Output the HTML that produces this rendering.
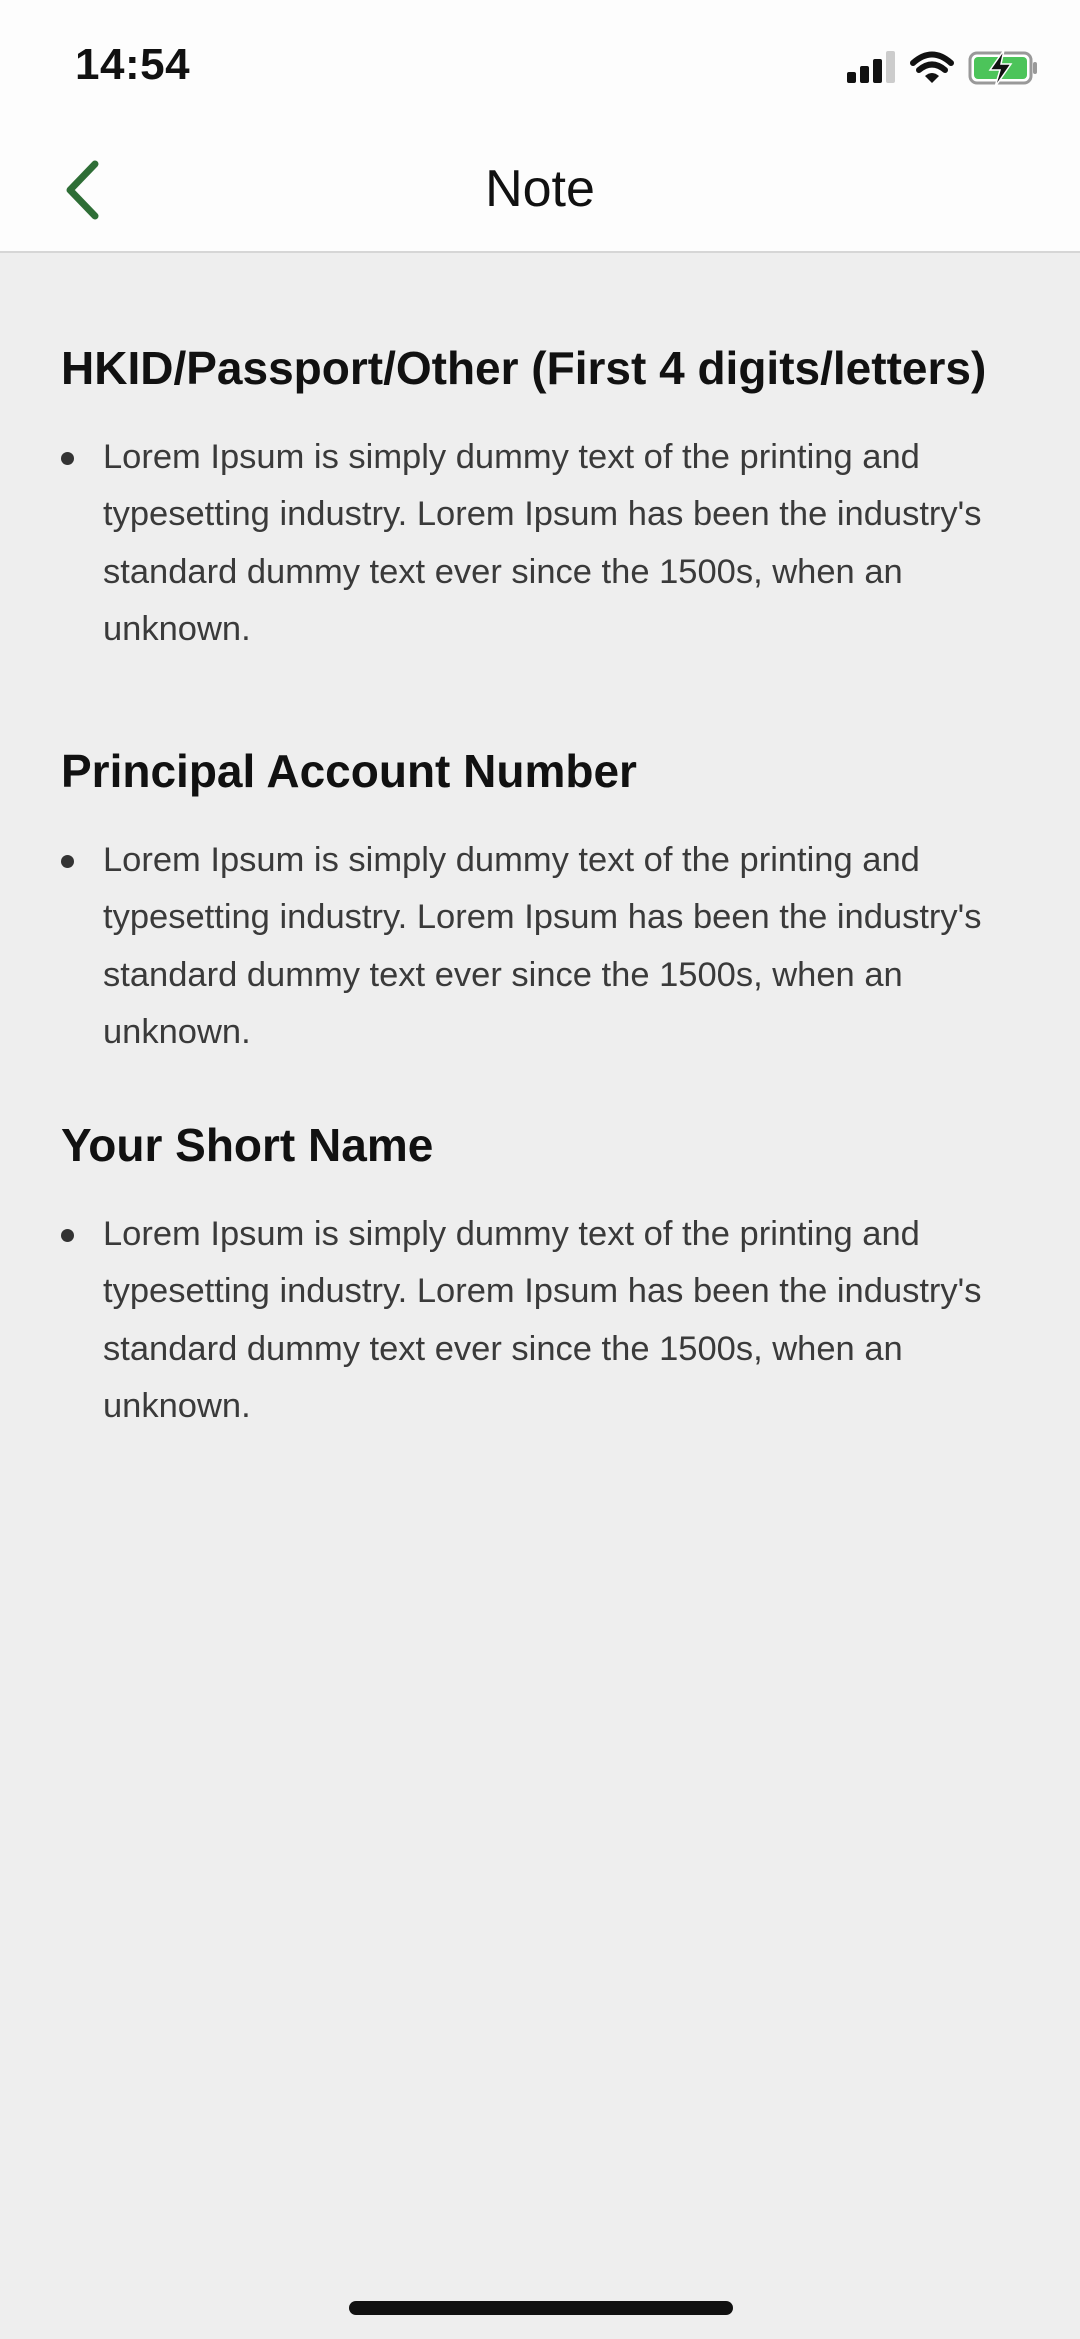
<!DOCTYPE html>
<html><head><meta charset="utf-8"><style>
*{margin:0;padding:0;box-sizing:border-box}
body{width:1080px;height:2339px;background:#eeeeee;position:relative;overflow:hidden;font-family:"Liberation Sans",Arial,sans-serif}
.hdr{position:absolute;left:0;top:0;width:1080px;height:253px;background:#fdfdfd;border-bottom:2px solid #d6d6d6}
.t{position:absolute;white-space:nowrap}
.h{left:61px;font-weight:bold;font-size:46px;color:#111;line-height:50px}
.p{left:103px;font-size:34.5px;color:#3a3a3a;line-height:57.4px;width:970px}
.b{position:absolute;left:61px;width:13px;height:13px;border-radius:50%;background:#333}
</style></head><body>
<div class="hdr"></div>
<div class="t" style="left:75px;top:40px;font-size:44px;font-weight:bold;color:#111;line-height:50px;letter-spacing:0.5px">14:54</div>
<svg style="position:absolute;left:840px;top:45px" width="210" height="45" viewBox="840 45 210 45">
<rect x="847" y="72" width="9" height="11" rx="2" fill="#111"/>
<rect x="860" y="66" width="9" height="17" rx="2" fill="#111"/>
<rect x="873" y="59" width="9" height="24" rx="2" fill="#111"/>
<rect x="886" y="51" width="9" height="32" rx="2" fill="#ccc"/>
<path d="M913 63 Q932 46 951 63" stroke="#111" stroke-width="6" fill="none" stroke-linecap="round"/>
<path d="M919 70 Q932 59 945 70" stroke="#111" stroke-width="6" fill="none" stroke-linecap="round"/>
<path d="M925 76 L932 83 L939 76 Q932 70 925 76Z" fill="#111"/>
<rect x="970" y="53" width="61" height="30" rx="7" fill="#fff" stroke="#999" stroke-width="3"/>
<rect x="974" y="57" width="53" height="22" rx="4" fill="#4cc45a"/>
<rect x="1033" y="62" width="4" height="12" rx="2" fill="#999"/>
<path d="M1004 50 L990 70 L1000 70 L995 87 L1011 64 L1001 64 Z" fill="#111" stroke="#fff" stroke-width="1.5"/>
</svg>
<svg style="position:absolute;left:60px;top:158px" width="44" height="64"><path d="M35 6 L10 32 L35 58" stroke="#2e6e36" stroke-width="7" fill="none" stroke-linecap="round" stroke-linejoin="round"/></svg>
<div class="t" style="left:0;width:1080px;text-align:center;top:161px;font-size:52px;color:#111;line-height:56px">Note</div>

<div class="t h" style="top:343px">HKID/Passport/Other (First 4 digits/letters)</div>
<div class="b" style="top:452px"></div>
<div class="t p" style="top:429px">Lorem Ipsum is simply dummy text of the printing and<br>typesetting industry. Lorem Ipsum has been the industry's<br>standard dummy text ever since the 1500s, when an<br>unknown.</div>

<div class="t h" style="top:746px">Principal Account Number</div>
<div class="b" style="top:855px"></div>
<div class="t p" style="top:832px">Lorem Ipsum is simply dummy text of the printing and<br>typesetting industry. Lorem Ipsum has been the industry's<br>standard dummy text ever since the 1500s, when an<br>unknown.</div>

<div class="t h" style="top:1120px">Your Short Name</div>
<div class="b" style="top:1229px"></div>
<div class="t p" style="top:1206px">Lorem Ipsum is simply dummy text of the printing and<br>typesetting industry. Lorem Ipsum has been the industry's<br>standard dummy text ever since the 1500s, when an<br>unknown.</div>

<div style="position:absolute;left:349px;top:2301px;width:384px;height:14px;border-radius:7px;background:#111"></div>
</body></html>
